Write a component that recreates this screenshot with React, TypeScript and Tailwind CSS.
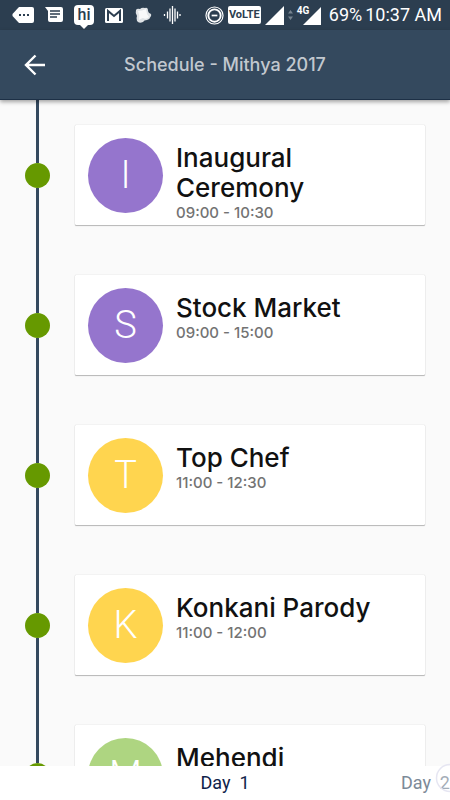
type ScheduleEvent = {
	title: string;
	time?: string;
	color: string;
};

const EVENTS: ScheduleEvent[] = [
	{ title: "Inaugural Ceremony", time: "09:00 - 10:30", color: "bg-[#9575cd]" },
	{ title: "Stock Market", time: "09:00 - 15:00", color: "bg-[#9575cd]" },
	{ title: "Top Chef", time: "11:00 - 12:30", color: "bg-[#ffd54f]" },
	{ title: "Konkani Parody", time: "11:00 - 12:00", color: "bg-[#ffd54f]" },
	{ title: "Mehendi", color: "bg-[#aed581]" },
];

function Notifications() {
	return (
		<div className="flex items-center gap-[11px] text-white">
			<svg width="22" height="18" viewBox="0 0 22 18" aria-hidden="true">
				<path d="M7 1h13q2 0 2 2v12q0 2-2 2H7L.5 10V8z" fill="currentColor" />
				<path d="M7 8h2v2H7zM11 8h2v2h-2zM15 8h2v2h-2z" fill="#2c3e50" />
			</svg>
			<svg width="18" height="18" viewBox="0 0 18 18" aria-hidden="true">
				<path d="M0 1h16q2 0 2 2v11q0 2-2 2H5q-2 0-2-2V5z" fill="currentColor" />
				<path d="M5 5h10M5 8h10M5 11h7" stroke="#2c3e50" strokeWidth="1.5" />
			</svg>
			<span className="relative flex h-5 w-5 items-center justify-center rounded-sm bg-white pb-px text-base leading-5 font-medium text-[#2c3e50]">
				hi
				<svg
					className="absolute top-5 left-1.5"
					width="8"
					height="4"
					viewBox="0 0 8 4"
					aria-hidden="true">
					<path d="M0 0h8L4 4z" fill="#fff" />
				</svg>
			</span>
			<svg width="18" height="16" viewBox="0 0 18 16" aria-hidden="true">
				<rect y="1" width="18" height="15" rx="1.5" fill="currentColor" />
				<path
					d="M3 14V4l6 5 6-5v10"
					fill="none"
					stroke="#2c3e50"
					strokeWidth="2"
				/>
			</svg>
			<svg width="18" height="18" viewBox="0 0 18 18" aria-hidden="true">
				<path
					d="M2 4q1-2 4-1 2-2 5-1 3-1 3 3l1 2q3 1 2 3-1 3-4 4-3 0-4 2-4 2-6-1-1-3 0-5-2-3-1-6z"
					fill="#dfe3e6"
				/>
				<path d="M4 5q4 0 8-2l1 5 2 3q-3 3-6 1-3 1-4 2 1-5-1-9z" fill="#f8f9fa" />
			</svg>
			<svg width="18" height="20" viewBox="0 0 18 20" aria-hidden="true">
				<path
					d="M1.500 9v2M4.500 6.500v7M7 3.500v13M9.500 1v18M12 3.500v13M14.500 6.500v7M17 9v2"
					stroke="currentColor"
					strokeWidth="1.300"
				/>
			</svg>
		</div>
	);
}

function StatusBar() {
	return (
		<div className="flex h-[30px] shrink-0 items-center justify-between bg-[#2c3e50] pr-2 pl-3 font-[Roboto,sans-serif] text-white">
			<Notifications />
			<div className="flex items-center">
				<svg width="19" height="19" viewBox="0 0 20 20" aria-hidden="true">
					<circle cx="10" cy="10" r="9" fill="none" stroke="#fff" strokeWidth="1.200" />
					<circle cx="10" cy="10" r="6.500" fill="none" stroke="#fff" strokeWidth="2" />
					<path d="M7 10h6" stroke="#fff" strokeWidth="1.800" />
				</svg>
				<span className="ml-1 flex h-[18px] w-[33px] items-center justify-center rounded-xs bg-white text-[11px] font-bold text-[#2c3e50]">
					VoLTE
				</span>
				<svg className="ml-1" width="19" height="19" viewBox="0 0 19 19" aria-hidden="true">
					<path d="M19 0v19H0z" fill="#fff" />
				</svg>
				<svg className="ml-1" width="5" height="10" viewBox="0 0 5 10" aria-hidden="true">
					<path d="M0 3.500L2.500 0 5 3.500zM0 6.500h5L2.500 10z" fill="#76838f" />
				</svg>
				<span className="relative ml-1 flex h-[19px] w-6 items-end justify-end">
					<svg width="18" height="18" viewBox="0 0 18 18" aria-hidden="true">
						<path d="M18 0v18H0z" fill="#fff" />
					</svg>
					<span className="absolute top-0 left-0 bg-[#2c3e50] text-[10px] leading-[10px] font-bold">
						4G
					</span>
				</span>
				<span className="ml-2 text-lg leading-5">69%</span>
				<span className="ml-[3px] text-lg leading-5 whitespace-nowrap">10:37 AM</span>
			</div>
		</div>
	);
}

function Header() {
	return (
		<header className="relative z-10 grid h-[70px] shrink-0 grid-cols-[70px_1fr_70px] items-center border-b border-[#1d3046] bg-[#34495e] shadow-[0_2px_4px_rgba(0,0,0,0.35)]">
			<button type="button" aria-label="Back" className="flex justify-center text-white">
				<svg width="22" height="22" viewBox="0 0 22 22" aria-hidden="true">
					<path
						d="M21 11H2.500M11.500 1.500L2 11l9.500 9.500"
						fill="none"
						stroke="currentColor"
						strokeWidth="2.400"
					/>
				</svg>
			</button>
			<h1 className="text-center text-lg font-medium text-[#c2c8cf]">
				Schedule - Mithya 2017
			</h1>
		</header>
	);
}

function EventRow({ event }: { event: ScheduleEvent }) {
	return (
		<li className="flex h-[150px] pr-[25px]">
			<div className="flex w-[75px] shrink-0 flex-col items-center">
				<span className="w-[3px] flex-1 bg-[#34495e]" />
				<span className="h-[25px] w-[25px] rounded-full bg-[#669900]" />
				<span className="w-[3px] flex-1 bg-[#34495e]" />
			</div>
			<article className="my-[25px] flex flex-1 items-start gap-[13px] rounded-[1px] bg-white p-[13px] shadow-[0_0_1px_rgba(0,0,0,0.3),0_1px_1px_rgba(0,0,0,0.25)]">
				<span
					className={`flex h-[75px] w-[75px] shrink-0 items-center justify-center rounded-full font-[Roboto,sans-serif] text-[38px] font-light text-white ${event.color}`}>
					{event.title[0]}
				</span>
				<div className="min-w-0 flex-1 pt-[5px]">
					<h2 className="text-[26px] leading-[30px] font-medium text-[#111111]">
						{event.title}
					</h2>
					{event.time && (
						<p className="text-[15px] leading-[20px] font-medium text-[#737373]">
							{event.time}
						</p>
					)}
				</div>
			</article>
		</li>
	);
}

function DayTabs() {
	return (
		<nav className="relative grid h-[34px] shrink-0 grid-cols-3 items-center bg-white font-[Roboto,sans-serif] text-lg whitespace-pre">
			<a href="#day-1" className="col-start-2 text-center text-[#10234a]">
				Day  1
			</a>
			<a href="#day-2" className="text-right text-[#7d8a98]">
				Day  2
			</a>
			<svg
				className="pointer-events-none absolute -top-1 right-0"
				width="15"
				height="32"
				viewBox="0 0 15 32"
				aria-hidden="true">
				<circle
					cx="15"
					cy="16"
					r="13.500"
					fill="#fff"
					fillOpacity="0.3"
					stroke="#e6e6f2"
					strokeWidth="1.500"
				/>
			</svg>
		</nav>
	);
}

export default function App() {
	return (
		<div className="flex h-screen flex-col overflow-hidden bg-[#fafafa] font-[Inter,sans-serif]">
			<StatusBar />
			<Header />
			<main className="min-h-0 flex-1 overflow-hidden">
				<ul>
					{EVENTS.map((event) => (
						<EventRow key={event.title} event={event} />
					))}
				</ul>
			</main>
			<DayTabs />
		</div>
	);
}
